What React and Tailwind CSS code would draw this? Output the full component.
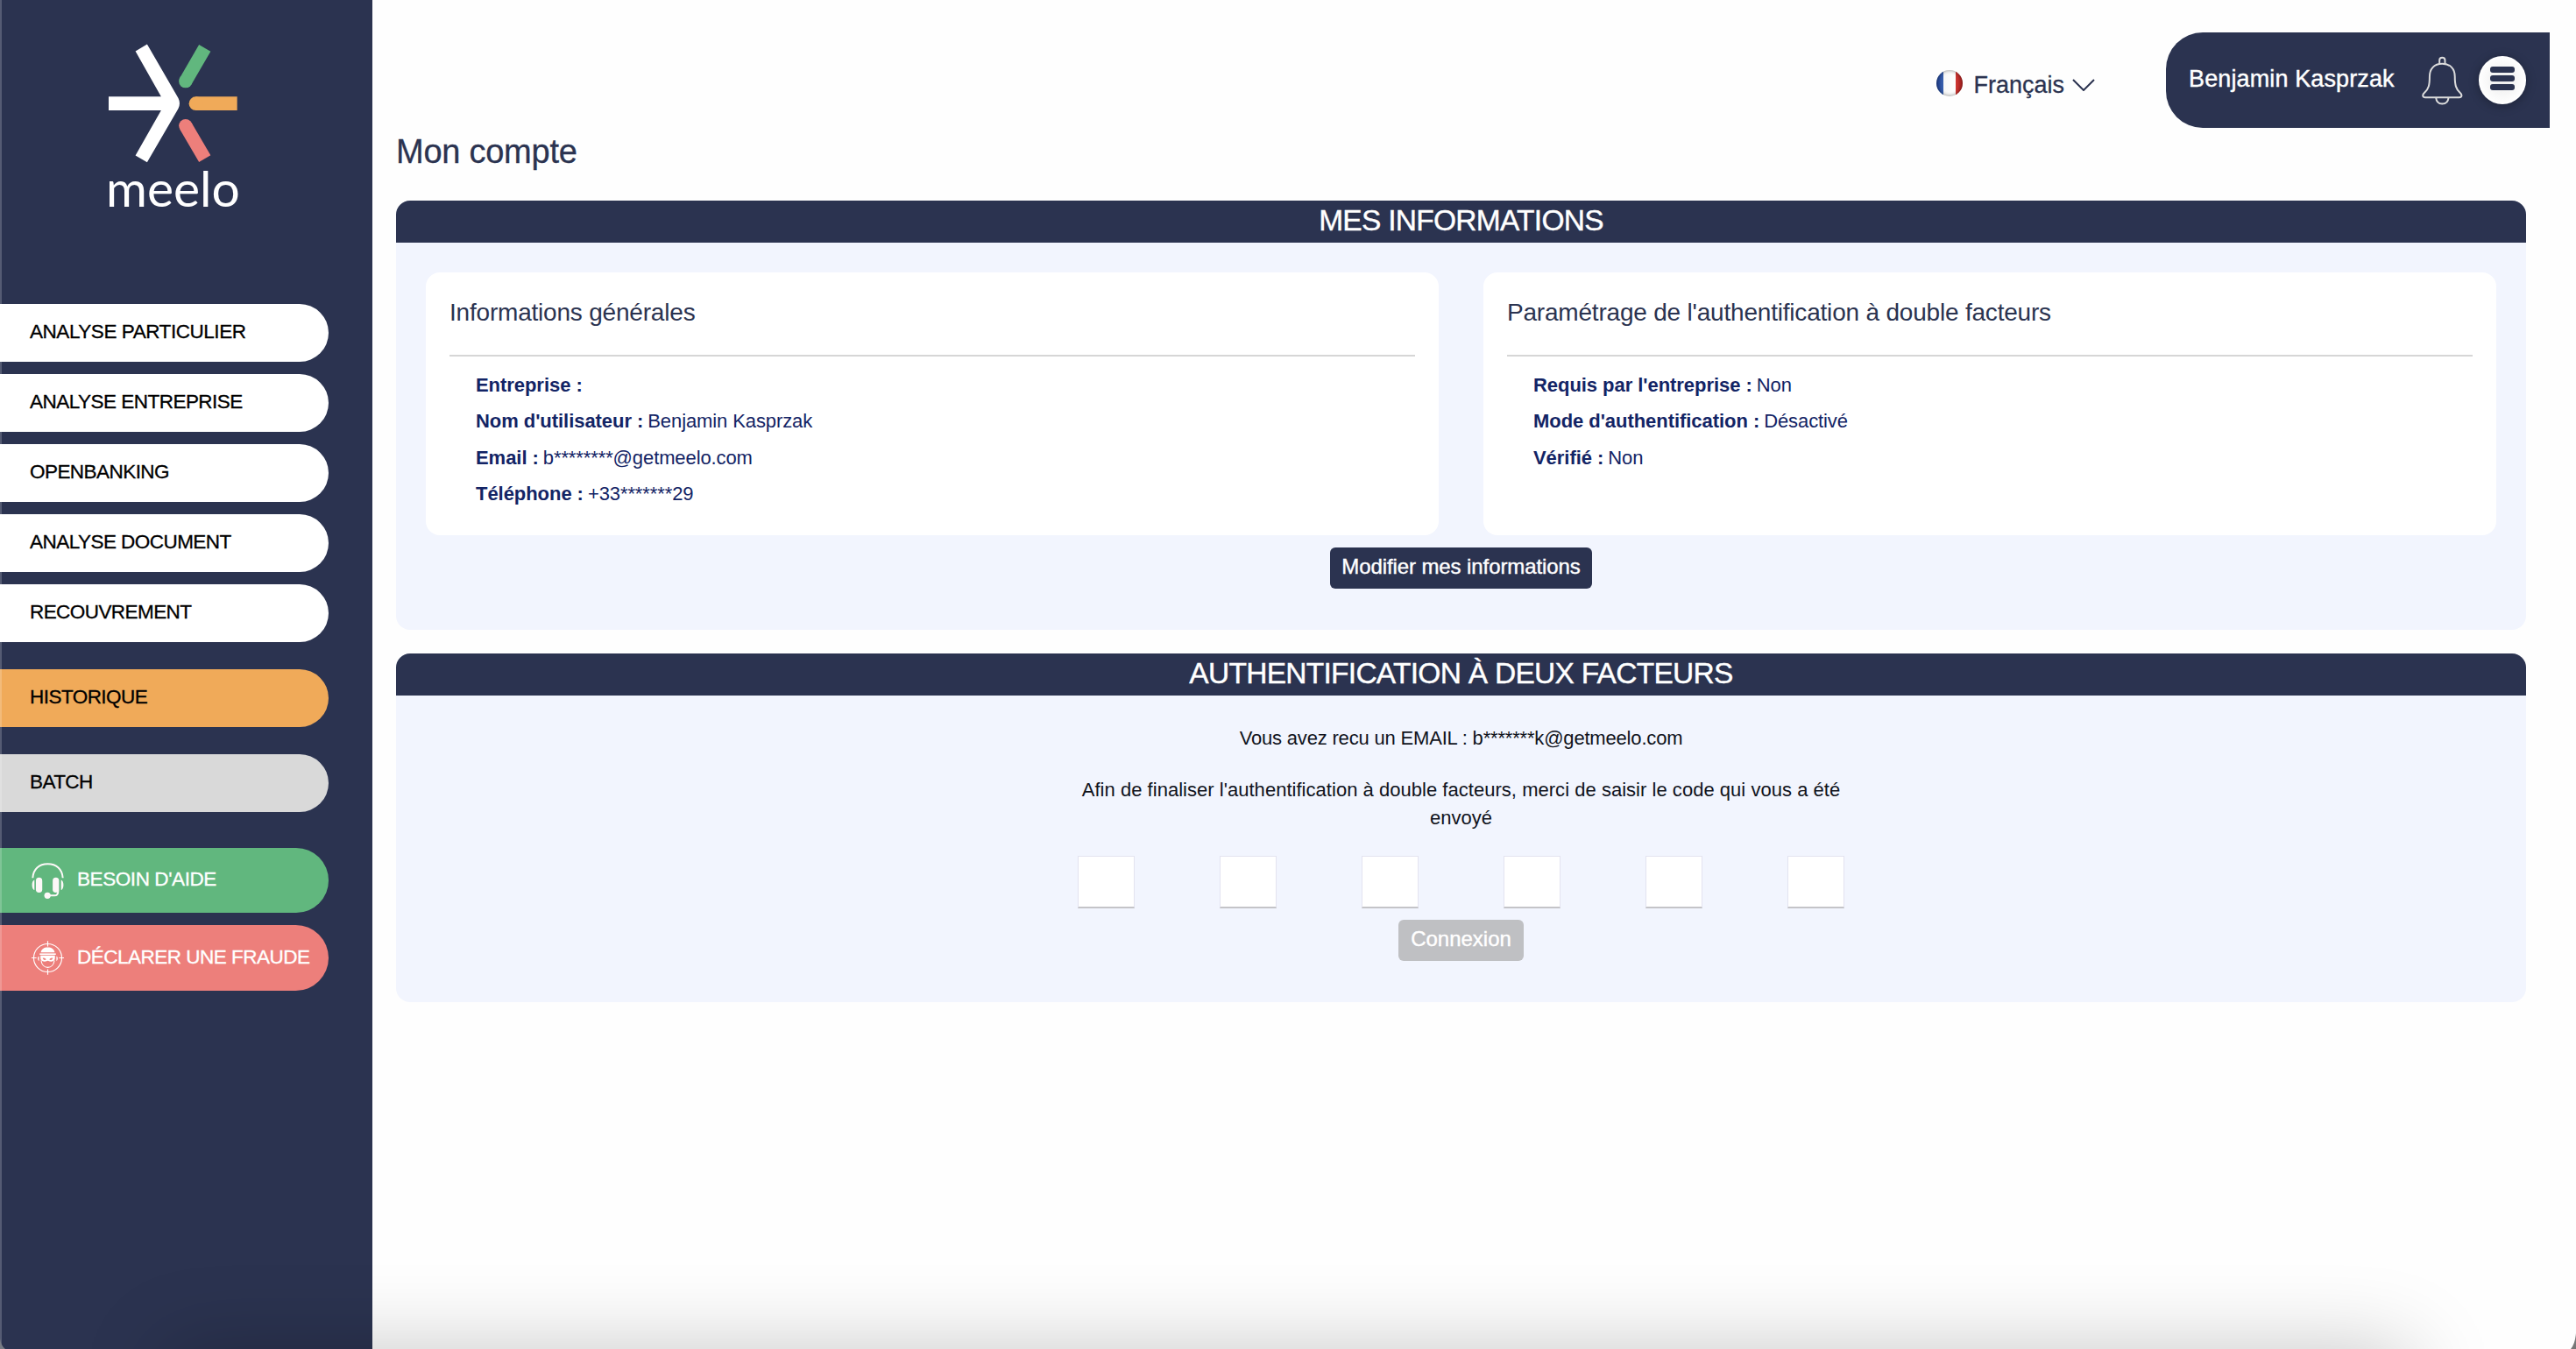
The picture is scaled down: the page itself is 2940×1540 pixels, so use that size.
import React from "react";
import clsx from "clsx";

const mainLinks = [
  { label: "ANALYSE PARTICULIER", className: "tracking-[-0.45px]" },
  { label: "ANALYSE ENTREPRISE", className: "tracking-[-0.52px]" },
  { label: "OPENBANKING", className: "tracking-[-0.55px]" },
  { label: "ANALYSE DOCUMENT", className: "tracking-[-0.54px]" },
  { label: "RECOUVREMENT", className: "tracking-[-0.57px]" },
];

const generalInfos = [
  { label: "Entreprise :", value: "" },
  { label: "Nom d'utilisateur :", value: "Benjamin Kasprzak" },
  { label: "Email :", value: "b********@getmeelo.com" },
  { label: "Téléphone :", value: "+33*******29" },
];

const authInfos = [
  { label: "Requis par l'entreprise :", value: "Non" },
  { label: "Mode d'authentification :", value: "Désactivé" },
  { label: "Vérifié :", value: "Non" },
];

const Logo = () => (
  <div className="flex w-[148px] flex-col text-white">
    <svg viewBox="372 149 442 408" className="h-[136px] w-[147px]" fill="none">
      <path
        d="M464 174 504 150 611 335Q620 353 611 371L504 555 464 532 552 377H372V330H552Z"
        fill="white"
      />
      <path d="M702 163 636 277" stroke="#61b77e" strokeWidth="46" />
      <circle cx="636" cy="277" r="23" fill="#61b77e" />
      <path d="M813 353.5H671" stroke="#f0aa59" strokeWidth="47" />
      <circle cx="671" cy="353.5" r="23.5" fill="#f0aa59" />
      <path d="M702 543 636 430" stroke="#ed7f7b" strokeWidth="46" />
      <circle cx="636" cy="430" r="23" fill="#ed7f7b" />
    </svg>
    <span className="-mt-[2px] -ml-[3px] h-[60px] font-[Lato,sans-serif] text-[57px] leading-[60px] whitespace-nowrap">
      meelo
    </span>
  </div>
);

const HeadsetIcon = () => (
  <svg viewBox="18 26 112 130" className="h-[43px] w-[37px] shrink-0" fill="none">
    <path d="M22 81C24 50 44 33 74 33S124 50 126 81" stroke="#fdf8f8" strokeWidth="6" />
    <rect x="33" y="80" width="22" height="52" rx="11" fill="#fdf8f8" />
    <rect x="91" y="80" width="22" height="52" rx="11" fill="#fdf8f8" />
    <path d="M28 88C17 90 17 120 28 123ZM120 88C131 90 131 120 120 123Z" fill="#fdf8f8" />
    <path d="M73 142H97Q110 142 110 124" stroke="#fdf8f8" strokeWidth="6" />
    <circle cx="73" cy="142" r="11" fill="#fdf8f8" />
  </svg>
);

const FraudIcon = () => (
  <svg viewBox="18 297 112 116" className="h-[39px] w-[37px] shrink-0" fill="none">
    <circle cx="74" cy="355" r="48.5" stroke="white" strokeWidth="3.5" />
    <path d="M74 297V316M74 394V413M18 355H35M113 355H130" stroke="white" strokeWidth="3.5" />
    <path d="M50 336C52 325 61 319 74 319S96 325 98 336Z" fill="white" />
    <path d="M46 342H102" stroke="white" strokeWidth="5" />
    <path d="M49 347H99V356C99 366 90 371 74 365 58 371 49 366 49 356Z" fill="white" />
    <path d="M56 356Q63 353 69 360 60 366 56 356ZM92 356Q85 353 79 360 88 366 92 356Z" fill="#ed7f7b" />
    <path d="M51 364C53 378 62 388 74 388S95 378 97 364" stroke="white" strokeWidth="3.5" />
    <path d="M44 349C38 351 38 363 44 366ZM104 349C110 351 110 363 104 366Z" fill="white" />
  </svg>
);

const BellIcon = () => (
  <svg viewBox="42 40 142 168" className="h-[56px] w-[47px] shrink-0" fill="none" stroke="#dcdcdc" strokeWidth="6">
    <path d="M103 66V54Q103 45 112.500 45T122 54V66" />
    <path d="M112.500 66C84 66 69 84 69 110C69 140 66 152 52 165C42 174 45 182 54 182H171C180 182 183 174 173 165C160 152 156 140 156 110C156 84 141 66 112.500 66Z" />
    <path d="M91 183C92 197 100 204 112.500 204S133 197 134 183" />
  </svg>
);

const NavPill = ({ className, textClassName, icon, children }) => (
  <a
    className={clsx(
      "flex w-[375px] items-center rounded-r-full text-[22.5px] leading-[30px] whitespace-nowrap [-webkit-text-stroke:0.3px]",
      className
    )}
  >
    {icon}
    <span className={clsx("pb-[2px]", textClassName)}>{children}</span>
  </a>
);

const Sidebar = () => (
  <aside className="flex w-[425px] shrink-0 flex-col bg-[#2b3350]">
    <div className="flex h-[347px] pt-[50px] pl-[124px]">
      <Logo />
    </div>
    <nav className="flex flex-col">
      <div className="flex flex-col gap-[14px]">
        {mainLinks.map((link) => (
          <NavPill key={link.label} className="h-[66px] bg-white pl-[34px] text-black" textClassName={link.className}>
            {link.label}
          </NavPill>
        ))}
      </div>
      <NavPill className="mt-[31px] h-[66px] bg-[#f0aa59] pl-[34px] text-black" textClassName="tracking-[-0.54px]">
        HISTORIQUE
      </NavPill>
      <NavPill className="mt-[31px] h-[66px] bg-[#d9d9d9] pl-[34px] text-black" textClassName="tracking-[-0.6px]">
        BATCH
      </NavPill>
      <NavPill
        className="mt-[41px] h-[74px] gap-[15px] bg-[#61b77e] pl-[36px] text-white"
        textClassName="tracking-[-0.42px]"
        icon={<HeadsetIcon />}
      >
        BESOIN D'AIDE
      </NavPill>
      <NavPill
        className="mt-[14px] h-[75px] gap-[15px] bg-[#ed7f7b] pl-[36px] text-white"
        textClassName="tracking-[-0.5px]"
        icon={<FraudIcon />}
      >
        DÉCLARER UNE FRAUDE
      </NavPill>
    </nav>
  </aside>
);

const Header = () => (
  <header className="flex h-[146px] justify-end pt-[37px] pr-[30px]">
    <button className="mt-[41px] mr-[81px] flex h-[34px] items-center text-[#2b3350]">
      <span className="h-[30px] w-[30px] rounded-full bg-[linear-gradient(90deg,#1f3f8f_0,#3a62b0_28%,#f6f6f6_28%,#fff_72%,#d23a35_72%,#a81e1e_100%)] shadow-[inset_0_0_4px_rgba(0,0,0,0.45)]" />
      <span className="ml-[12px] pt-[4px] text-[27px] leading-[34px] [-webkit-text-stroke:0.3px]">Français</span>
      <svg viewBox="0 0 26 14" className="mt-[3px] ml-[9px] h-[14px] w-[26px]" fill="none" stroke="#2b3350" strokeWidth="2">
        <path d="M1 1 13 13 25 1" />
      </svg>
    </button>
    <div className="flex h-[109px] w-[438px] rounded-l-[42px] bg-[#2b3350] pl-[26px] text-white">
      <span className="mt-[36px] w-[266px] text-[27px] leading-[34px] tracking-[0.12px] whitespace-nowrap [-webkit-text-stroke:0.4px]">
        Benjamin Kasprzak
      </span>
      <div className="mt-[27px]">
        <BellIcon />
      </div>
      <button className="mt-[27px] ml-[18px] flex h-[55px] w-[54px] flex-col items-center gap-[3px] rounded-full bg-[radial-gradient(circle,#ebebeb_0%,#fff_70%)] pt-[12px] shadow-[0_2px_12px_rgba(0,0,0,0.3)]">
        <span className="h-[7px] w-[28px] rounded-[3px] bg-[#2b3350]" />
        <span className="h-[7px] w-[28px] rounded-[3px] bg-[#2b3350]" />
        <span className="h-[7px] w-[28px] rounded-[3px] bg-[#2b3350]" />
      </button>
    </div>
  </header>
);

const Panel = ({ title, className, children }) => (
  <section className={clsx("flex flex-col items-center overflow-hidden rounded-2xl bg-[#f2f5fe]", className)}>
    <h2 className="h-12 w-full bg-[#2b3350] text-center text-[33.5px] leading-[45px] tracking-[-0.72px] text-white [-webkit-text-stroke:0.4px]">
      {title}
    </h2>
    {children}
  </section>
);

const InfoCard = ({ title, rows }) => (
  <div className="h-[300px] w-[1156px] rounded-2xl bg-white px-[27px] pt-[26px]">
    <h3 className="h-[70px] border-b-2 border-[#d6d6d6] text-[28px] leading-[40px] tracking-[-0.2px] text-[#2b3350]">
      {title}
    </h3>
    <dl className="flex flex-col pt-[12px] pl-[30px] text-[22px] leading-[41.333px] text-[#132465]">
      {rows.map((row) => (
        <div key={row.label} className="flex gap-[5px]">
          <dt className="font-bold tracking-[-0.05px]">{row.label}</dt>
          <dd className="tracking-[-0.1px]">{row.value}</dd>
        </div>
      ))}
    </dl>
  </div>
);

const App = () => {
  return (
    <div className="relative flex h-[1540px] w-[2940px] overflow-hidden bg-[#fefefe] font-['Liberation_Sans',Arial,sans-serif]">
      <Sidebar />
      <div className="flex flex-1 flex-col">
        <Header />
        <main className="flex flex-col pr-[57px] pl-[27px]">
          <h1 className="mt-[5px] h-[78px] text-[38px] leading-[45px] tracking-[-0.25px] text-[#2b3350] [-webkit-text-stroke:0.3px]">
            Mon compte
          </h1>
          <Panel title="MES INFORMATIONS" className="h-[490px]">
            <div className="mt-[34px] flex gap-[51px]">
              <InfoCard title="Informations générales" rows={generalInfos} />
              <InfoCard title="Paramétrage de l'authentification à double facteurs" rows={authInfos} />
            </div>
            <button className="mt-[14px] h-[47px] w-[299px] rounded-md bg-[#2b3350] pb-[3px] text-[24px] tracking-[-0.09px] text-white [-webkit-text-stroke:0.4px]">
              Modifier mes informations
            </button>
          </Panel>
          <Panel title="AUTHENTIFICATION À DEUX FACTEURS" className="mt-[27px] h-[398px]">
            <p className="mt-[33px] text-[22px] leading-[32px] tracking-[-0.18px] text-[#10131c]">
              Vous avez recu un EMAIL : b*******k@getmeelo.com
            </p>
            <p className="mt-[27px] w-[880px] text-center text-[22px] leading-[32px] tracking-[0.03px] text-[#10131c]">
              Afin de finaliser l'authentification à double facteurs, merci de saisir le code qui vous a été envoyé
            </p>
            <div className="mt-[27px] flex gap-[97px]">
              {[0, 1, 2, 3, 4, 5].map((i) => (
                <input
                  key={i}
                  maxLength={1}
                  className="h-[60px] w-[65px] border border-b-2 border-[#e3e3f0] border-b-[#c4c4c8] bg-white text-center"
                />
              ))}
            </div>
            <button className="mt-[13px] h-[47px] w-[143px] rounded-md bg-[#bfc0c3] pb-[3px] text-[24px] text-white [-webkit-text-stroke:0.4px]">
              Connexion
            </button>
          </Panel>
        </main>
      </div>

      {/* Window edge and the soft shadow along the bottom */}
      <div className="pointer-events-none absolute top-0 left-0 h-full w-[2px] bg-white/20" />
      <div className="pointer-events-none absolute top-[1540px] right-[190px] left-[190px] h-[200px] shadow-[0_0_96px_rgba(0,0,0,0.22)]" />
      <svg viewBox="0 0 6 12" className="absolute bottom-0 left-0 h-[12px] w-[6px]">
        <path d="M0 0Q1 8 6 12H0Z" fill="#777b84" />
      </svg>
      <svg viewBox="0 0 6 18" className="absolute right-0 bottom-0 h-[18px] w-[6px]">
        <path d="M6 0Q5 12 0 18H6Z" fill="#777" />
      </svg>
    </div>
  );
};

export default App;
